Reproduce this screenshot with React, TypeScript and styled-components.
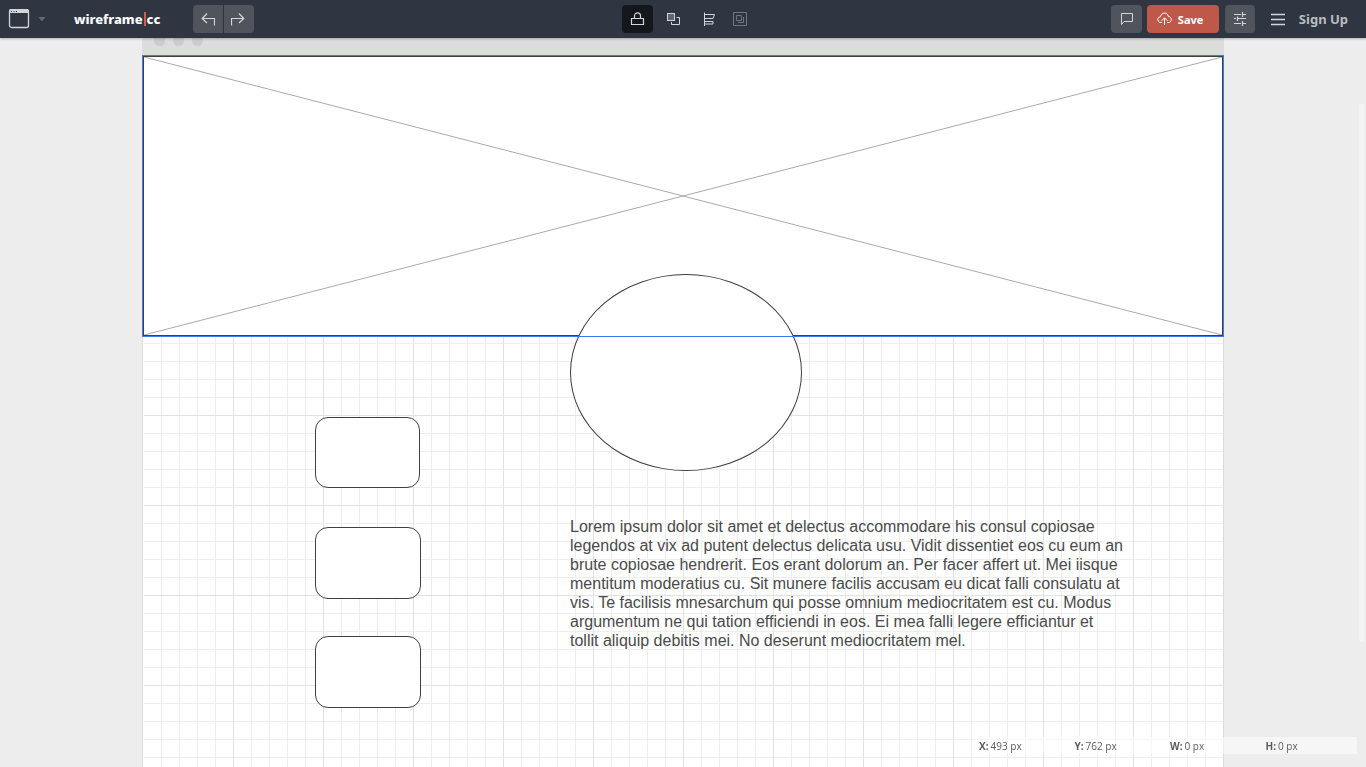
import React from "react";
import styled, { createGlobalStyle } from "styled-components";

const GlobalStyle = createGlobalStyle`
  *, *::before, *::after { box-sizing: border-box; }
  body {
    margin: 0;
    background: #ededed;
    font-family: "Open Sans", "Noto Sans", sans-serif;
  }
  button { font-family: inherit; }
`;

const Page = styled.div`
  display: flex;
  flex-direction: column;
  height: 100vh;
  overflow: hidden;
`;

const Header = styled.header`
  position: relative;
  z-index: 2;
  display: grid;
  grid-template-columns: 1fr auto 1fr;
  align-items: center;
  flex: none;
  height: 38px;
  background: #303641;
  box-shadow: 0 1px 2px rgba(0, 0, 0, 0.25);
  font-family: "Noto Sans", "Open Sans", sans-serif;
`;

const HeaderStart = styled.div`
  display: flex;
  align-items: center;
  padding-left: 8px;
`;

const HeaderCenter = styled.div`
  display: flex;
  align-items: center;
  gap: 5px;
  padding-left: 6px;
`;

const HeaderEnd = styled.div`
  display: flex;
  align-items: center;
  justify-content: flex-end;
  gap: 6px;
  padding-right: 18px;
`;

const IconButton = styled.button<{ $tone?: "plain" | "raised" | "active"; $width?: number }>`
  display: flex;
  align-items: center;
  justify-content: center;
  width: ${({ $width }) => $width ?? 30}px;
  height: 28px;
  padding: 0;
  border: 0;
  border-radius: 4px;
  color: #d3d6d9;
  background: ${({ $tone }) =>
    $tone === "raised" ? "#50545d" : $tone === "active" ? "#14171b" : "transparent"};

  &:disabled { opacity: 0.4; }
`;

const FrameButton = styled(IconButton)`
  justify-content: flex-start;
  gap: 8px;
  width: 40px;
`;

const Logo = styled.a`
  display: flex;
  align-items: center;
  margin-left: 26px;
  width: 88px;
  color: #ffffff;
  font-size: 13px;
  font-weight: 800;
  line-height: 20px;
  text-decoration: none;
  white-space: nowrap;
`;

const LogoBar = styled.span`
  width: 2px;
  height: 14px;
  margin: 0 1px;
  background: #d95b47;
`;

const History = styled.div`
  display: flex;
  gap: 1px;
  margin-left: 31px;

  ${IconButton}:first-child { border-radius: 4px 0 0 4px; }
  ${IconButton}:last-child { border-radius: 0 4px 4px 0; }
`;

const SaveButton = styled.button`
  display: flex;
  align-items: center;
  gap: 6px;
  width: 72px;
  height: 28px;
  margin-left: -1px;
  padding: 0 10px;
  border: 0;
  border-radius: 4px;
  color: #ffffff;
  background: #be594a;
  font-size: 11px;
  font-weight: 700;
`;

const MenuButton = styled(IconButton)`
  margin-left: 2px;
`;

const SignUp = styled.a`
  color: #b9bcc0;
  font-size: 13px;
  font-weight: 700;
  line-height: 20px;
  text-decoration: none;
  white-space: nowrap;
`;

const Workspace = styled.main`
  display: flex;
  flex: 1;
  flex-direction: column;
  align-items: center;
  min-height: 0;
  background: #ededed;
`;

const BrowserBar = styled.div`
  display: flex;
  gap: 8px;
  width: 1082px;
  height: 17px;
  padding-left: 12px;
  background: #dcdcdc;
`;

const BrowserDot = styled.span`
  width: 11px;
  height: 8px;
  border-radius: 0 0 6px 6px;
  background: #cbcbcb;
`;

const Paper = styled.section`
  position: relative;
  flex: 1;
  width: 1082px;
  padding-top: 1px;
  border: 0 solid #dddddd;
  border-width: 0 1px;
  background-color: #ffffff;
  background-image:
    linear-gradient(to right, #ffffff 1px, transparent 1px),
    linear-gradient(to right, #e2e2e2 1px, transparent 1px),
    linear-gradient(to bottom, #e2e2e2 1px, transparent 1px),
    linear-gradient(to right, #eeeeee 1px, transparent 1px),
    linear-gradient(to bottom, #eeeeee 1px, transparent 1px);
  background-size: 100% 100%, 90px 90px, 90px 90px, 18px 18px, 18px 18px;
`;

const Canvas = styled.div`
  position: relative;
`;

const ImageBlock = styled.div`
  position: absolute;
  top: 0;
  left: 0;
  width: 1080px;
  height: 280px;
  border: 1px solid #3f3f3f;
  background: #ffffff;

  svg { display: block; width: 100%; height: 100%; }
`;

const Selection = styled.div`
  position: absolute;
  top: -1px;
  left: -1px;
  width: 1082px;
  height: 282px;
  border: 1px solid #3b7bee;
`;

const Shape = styled.div<{ $x: number; $y: number; $w: number; $h: number; $radius: string }>`
  position: absolute;
  left: ${({ $x }) => $x}px;
  top: ${({ $y }) => $y}px;
  width: ${({ $w }) => $w}px;
  height: ${({ $h }) => $h}px;
  border: 1px solid #3f3f3f;
  border-radius: ${({ $radius }) => $radius};
  background: #ffffff;
`;

const Copy = styled.p`
  position: absolute;
  left: 427px;
  top: 461px;
  width: 555px;
  margin: 0;
  color: #4a4a4a;
  font-family: "Liberation Sans", Arial, sans-serif;
  font-size: 16px;
  line-height: 19px;
`;

const Status = styled.dl`
  position: fixed;
  right: 9px;
  bottom: 13px;
  z-index: 1;
  display: grid;
  grid-template-columns: repeat(4, 1fr);
  width: 382px;
  margin: 0;
  padding-top: 2px;
  background: rgba(255, 255, 255, 0.5);
  color: #5c5c5c;
  font-size: 10px;
  line-height: 15px;
`;

const StatusItem = styled.div`
  display: flex;
  gap: 2px;
  padding-left: 4px;

  dt { font-weight: 700; }
  dd { margin: 0; }
`;

const ScrollTrack = styled.div`
  position: fixed;
  top: 104px;
  right: 2px;
  bottom: 125px;
  width: 5px;
  border-radius: 2px;
  background: rgba(255, 255, 255, 0.4);
`;

const line = { fill: "none", stroke: "currentColor", strokeWidth: 1 } as const;

const FrameIcon = () => (
  <svg width="22" height="20" viewBox="0 0 22 20" aria-hidden="true">
    <rect x="1.5" y="0.5" width="19" height="18" rx="2" {...line} strokeWidth={1.3} />
    <path d="M1 4V2.500Q1 .5 3 .5H19Q21 .5 21 2.500V4Z" fill="currentColor" />
    <path d="M3 2h1v1H3zM5.500 2h1v1h-1zM8 2h1v1H8z" fill="#303641" />
  </svg>
);
const CaretIcon = () => (
  <svg width="8" height="5" viewBox="0 0 8 5" aria-hidden="true">
    <path d="M0.500 0H7.500L4 4.500Z" fill="#646972" />
  </svg>
);
const UndoIcon = () => (
  <svg width="14" height="14" viewBox="0 0 14 14" aria-hidden="true">
    <path d="M13.500 13.500V6.500H1.500M6 1.500L1.200 6.500L6 11" {...line} strokeWidth={1.2} />
  </svg>
);
const RedoIcon = () => (
  <svg width="16" height="14" viewBox="0 0 16 14" aria-hidden="true">
    <path d="M0.500 13.500V6.500H12.500M8 1.500L12.800 6.500L8 11" {...line} strokeWidth={1.2} />
  </svg>
);
const LockIcon = () => (
  <svg width="15" height="14" viewBox="0 0 15 14" aria-hidden="true">
    <path d="M1.500 6.500H13.500V12.500H1.500ZM4.500 6.500V3.800C4.500 -.1 10.500 -.1 10.500 3.800V6.500" {...line} strokeWidth={1.2} />
  </svg>
);
const CopiesIcon = () => (
  <svg width="15" height="14" viewBox="0 0 15 14" aria-hidden="true">
    <rect x="1.500" y="1.500" width="7" height="7" {...line} fill="#60656e" />
    <path d="M10.500 5.500H13.500V12.500H5.500V10" {...line} />
  </svg>
);
const AlignIcon = () => (
  <svg width="15" height="14" viewBox="0 0 15 14" aria-hidden="true">
    <path d="M2.500 0.500V14M3 2.500H12.500L11 6.500H3M3 9.500H11V12H3" {...line} />
  </svg>
);
const GroupIcon = () => (
  <svg width="14" height="14" viewBox="0 0 14 14" aria-hidden="true">
    <path d="M0.500 .5H13.500V13.500H.5ZM3.500 3.500H8.500V8.500H3.500ZM10.500 5V10.500H5" {...line} />
  </svg>
);
const CommentIcon = () => (
  <svg width="15" height="14" viewBox="0 0 15 14" aria-hidden="true">
    <path d="M2.500 1.500H13.500V9.500H5L2.500 12.500Z" {...line} />
  </svg>
);
const CloudIcon = () => (
  <svg width="15" height="14" viewBox="0 0 15 14" aria-hidden="true">
    <path
      d="M5 10.500H4C-.2 10.500-.1 5 3.500 4.800C4.200 0 10.500-.2 11.300 4.300C15.200 4.800 15.200 10.300 11.500 10.500H10M7.500 13V6M4.500 8.800L7.500 5.800L10.500 8.800"
      {...line}
    />
  </svg>
);
const TuneIcon = () => (
  <svg width="14" height="14" viewBox="0 0 14 14" aria-hidden="true">
    <path
      d="M1 2.500H8M10 2.500H13M1 6.500H3M5 6.500H13M1 11.500H8M10 11.500H13M9.500 0V5M4.500 4.500V9M9.500 9V14"
      {...line}
      strokeWidth={1.2}
    />
  </svg>
);
const MenuIcon = () => (
  <svg width="14" height="14" viewBox="0 0 14 14" aria-hidden="true">
    <path d="M0 2.500H14M0 7.500H14M0 12.500H14" {...line} strokeWidth={1.4} />
  </svg>
);

const shapes = [
  { x: 427, y: 218, w: 232, h: 197, radius: "50%" },
  { x: 172, y: 361, w: 105, h: 71, radius: "13px" },
  { x: 172, y: 471, w: 106, h: 72, radius: "13px" },
  { x: 172, y: 580, w: 106, h: 72, radius: "13px" },
];

const readings = [
  ["X:", "493 px"],
  ["Y:", "762 px"],
  ["W:", "0 px"],
  ["H:", "0 px"],
];

export default function App() {
  return (
    <Page>
      <GlobalStyle />
      <Header>
        <HeaderStart>
          <FrameButton aria-label="Choose frame">
            <FrameIcon />
            <CaretIcon />
          </FrameButton>
          <Logo href="#">
            wireframe<LogoBar />cc
          </Logo>
          <History>
            <IconButton $tone="raised" aria-label="Undo"><UndoIcon /></IconButton>
            <IconButton $tone="raised" aria-label="Redo"><RedoIcon /></IconButton>
          </History>
        </HeaderStart>
        <HeaderCenter>
          <IconButton $tone="active" $width={31} aria-label="Lock"><LockIcon /></IconButton>
          <IconButton $width={31} aria-label="Arrange"><CopiesIcon /></IconButton>
          <IconButton $width={31} aria-label="Align"><AlignIcon /></IconButton>
          <IconButton $width={20} aria-label="Group" disabled><GroupIcon /></IconButton>
        </HeaderCenter>
        <HeaderEnd>
          <IconButton $tone="raised" $width={31} aria-label="Comments"><CommentIcon /></IconButton>
          <SaveButton>
            <CloudIcon />
            Save
          </SaveButton>
          <IconButton $tone="raised" aria-label="Settings"><TuneIcon /></IconButton>
          <MenuButton aria-label="Menu"><MenuIcon /></MenuButton>
          <SignUp href="#">Sign Up</SignUp>
        </HeaderEnd>
      </Header>
      <Workspace>
        <BrowserBar>
          <BrowserDot />
          <BrowserDot />
          <BrowserDot />
        </BrowserBar>
        <Paper>
          <Canvas>
            <ImageBlock>
              <svg viewBox="0 0 1078 278" preserveAspectRatio="none" aria-hidden="true">
                <path d="M0 0L1078 278M1078 0L0 278" fill="none" stroke="#aaaaaa" />
              </svg>
            </ImageBlock>
            {shapes.map((s) => (
              <Shape key={`${s.x}-${s.y}`} $x={s.x} $y={s.y} $w={s.w} $h={s.h} $radius={s.radius} />
            ))}
            <Selection />
            <Copy>
              Lorem ipsum dolor sit amet et delectus accommodare his consul copiosae legendos at vix ad
              putent delectus delicata usu. Vidit dissentiet eos cu eum an brute copiosae hendrerit. Eos
              erant dolorum an. Per facer affert ut. Mei iisque mentitum moderatius cu. Sit munere
              facilis accusam eu dicat falli consulatu at vis. Te facilisis mnesarchum qui posse omnium
              mediocritatem est cu. Modus argumentum ne qui tation efficiendi in eos. Ei mea falli
              legere efficiantur et tollit aliquip debitis mei. No deserunt mediocritatem mel.
            </Copy>
          </Canvas>
        </Paper>
      </Workspace>
      <ScrollTrack />
      <Status>
        {readings.map(([label, value]) => (
          <StatusItem key={label}>
            <dt>{label}</dt>
            <dd>{value}</dd>
          </StatusItem>
        ))}
      </Status>
    </Page>
  );
}
